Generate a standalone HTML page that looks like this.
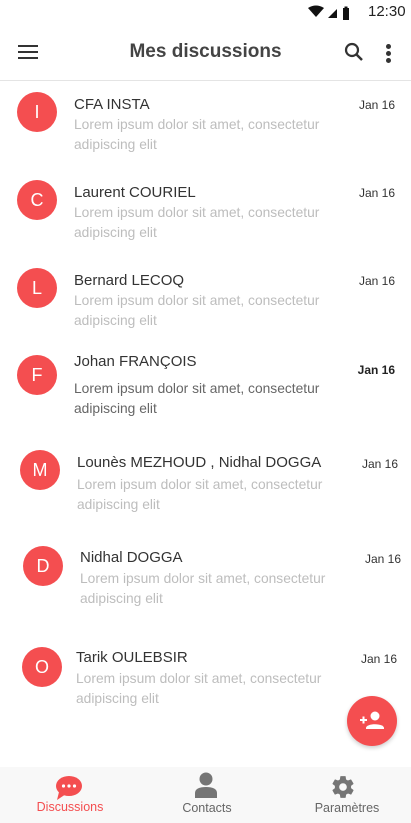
<!DOCTYPE html>
<html><head><meta charset="utf-8"><style>
*{margin:0;padding:0;box-sizing:border-box}
body{width:411px;height:823px;position:relative;background:#fff;font-family:"Liberation Sans",sans-serif;overflow:hidden}
.a{position:absolute}
.av{position:absolute;width:40px;height:40px;border-radius:50%;background:#f44e50;color:#fff;font-size:18px;line-height:40px;text-align:center}
.n{position:absolute;font-size:15px;line-height:20px;color:#333;white-space:nowrap}
.l{position:absolute;font-size:13.8px;line-height:20px;color:#bdbdbd;white-space:nowrap}
.d{position:absolute;font-size:12px;line-height:16px;color:#333;white-space:nowrap;text-align:right;width:60px}
</style></head><body>
<div class="a" style="left:308px;top:5px">
<svg width="52" height="16" viewBox="0 0 52 16"><path d="M0 3 Q8 -2 16 3 L8 12Z" fill="#111"/><path d="M20 13 L29 13 L29 4Z" fill="#111"/><rect x="35" y="3" width="6" height="12" fill="#111"/><rect x="36.5" y="1.5" width="3" height="2" fill="#111"/></svg></div>
<div class="a" style="left:368px;top:3px;font-size:15px;color:#222">12:30</div>
<div class="a" style="left:18px;top:45px;width:20px;height:2px;background:#333;box-shadow:0 6px 0 #333,0 12px 0 #333"></div>
<div class="a" style="left:0;width:411px;top:41px;text-align:center;font-size:19px;font-weight:bold;color:#444">Mes discussions</div>
<svg class="a" style="left:344px;top:42px" width="20" height="20" viewBox="0 0 20 20"><circle cx="8" cy="8" r="6" stroke="#333" stroke-width="2.2" fill="none"/><path d="M12.5 12.5L18 18" stroke="#333" stroke-width="2.5"/></svg>
<div class="a" style="left:386px;top:44px;width:5px;height:5px;border-radius:50%;background:#333;box-shadow:0 7px 0 #333,0 14px 0 #333"></div>
<div class="a" style="left:0;top:80px;width:411px;height:1px;background:#e4e4e4"></div>

<div class="av" style="left:17px;top:92px">I</div>
<div class="n" style="left:74px;top:95px">CFA INSTA</div>
<div class="d" style="left:335px;top:97px">Jan 16</div>
<div class="l" style="left:74px;top:115px">Lorem ipsum dolor sit amet, consectetur<br>adipiscing elit</div>

<div class="av" style="left:17px;top:180px">C</div>
<div class="n" style="left:74px;top:183px">Laurent COURIEL</div>
<div class="d" style="left:335px;top:185px">Jan 16</div>
<div class="l" style="left:74px;top:203px">Lorem ipsum dolor sit amet, consectetur<br>adipiscing elit</div>

<div class="av" style="left:17px;top:268px">L</div>
<div class="n" style="left:74px;top:271px">Bernard LECOQ</div>
<div class="d" style="left:335px;top:273px">Jan 16</div>
<div class="l" style="left:74px;top:291px">Lorem ipsum dolor sit amet, consectetur<br>adipiscing elit</div>

<div class="av" style="left:17px;top:355px">F</div>
<div class="n" style="left:74px;top:352px">Johan FRANÇOIS</div>
<div class="d" style="left:335px;top:362px;font-weight:bold;color:#222">Jan 16</div>
<div class="l" style="left:74px;top:379px;color:#666">Lorem ipsum dolor sit amet, consectetur<br>adipiscing elit</div>

<div class="av" style="left:20px;top:450px">M</div>
<div class="n" style="left:77px;top:453px">Lounès MEZHOUD , Nidhal DOGGA</div>
<div class="d" style="left:338px;top:456px">Jan 16</div>
<div class="l" style="left:77px;top:475px">Lorem ipsum dolor sit amet, consectetur<br>adipiscing elit</div>

<div class="av" style="left:23px;top:546px">D</div>
<div class="n" style="left:80px;top:548px">Nidhal DOGGA</div>
<div class="d" style="left:341px;top:551px">Jan 16</div>
<div class="l" style="left:80px;top:569px">Lorem ipsum dolor sit amet, consectetur<br>adipiscing elit</div>

<div class="av" style="left:22px;top:647px">O</div>
<div class="n" style="left:76px;top:648px">Tarik OULEBSIR</div>
<div class="d" style="left:337px;top:651px">Jan 16</div>
<div class="l" style="left:76px;top:669px">Lorem ipsum dolor sit amet, consectetur<br>adipiscing elit</div>

<div class="a" style="left:347px;top:696px;width:50px;height:50px;border-radius:50%;background:#f44e50;box-shadow:0 2px 4px rgba(0,0,0,.2)">
<svg width="50" height="50" viewBox="0 0 50 50"><path d="M13 24h7M16.5 20.5v7" stroke="#fff" stroke-width="2"/><circle cx="28" cy="20" r="4.5" fill="#fff"/><path d="M19 32c0-5 18-5 18 0v1H19z" fill="#fff"/></svg></div>

<div class="a" style="left:0;top:767px;width:411px;height:56px;background:#f8f8f8"></div>
<svg class="a" style="left:55px;top:775px" width="28" height="26" viewBox="0 0 28 26"><ellipse cx="14" cy="11" rx="13" ry="10" fill="#f44e50"/><path d="M4 17 L2 25 L11 19Z" fill="#f44e50"/><circle cx="8.5" cy="11" r="1.6" fill="#fff"/><circle cx="14" cy="11" r="1.6" fill="#fff"/><circle cx="19.5" cy="11" r="1.6" fill="#fff"/></svg>
<div class="a" style="left:0;width:140px;top:800px;text-align:center;font-size:12.5px;color:#f44e50">Discussions</div>
<svg class="a" style="left:194px;top:772px" width="24" height="26" viewBox="0 0 24 26"><circle cx="12" cy="7" r="6.5" fill="#757575"/><path d="M1 26v-5c0-4 4-6 11-6s11 2 11 6v5z" fill="#757575"/></svg>
<div class="a" style="left:137px;width:140px;top:801px;text-align:center;font-size:12.5px;color:#666">Contacts</div>
<svg class="a" style="left:330px;top:774px" width="26" height="26" viewBox="0 0 24 24"><path fill="#757575" d="M19.4 13c.04-.3.06-.65.06-1s-.02-.7-.06-1l2.1-1.65c.2-.15.25-.42.12-.64l-2-3.46c-.12-.22-.39-.3-.61-.22l-2.490 1c-.52-.4-1.080-.73-1.690-.98l-.38-2.650C14.46 2.18 14.25 2 14 2h-4c-.25 0-.46.18-.49.42l-.38 2.65c-.61.25-1.17.59-1.69.98l-2.49-1c-.23-.09-.49 0-.61.22l-2 3.46c-.13.22-.07.49.12.64L4.57 11c-.04.32-.07.65-.07 1s.03.68.07 1l-2.11 1.65c-.19.15-.24.42-.12.64l2 3.46c.12.22.39.3.61.22l2.49-1c.52.4 1.08.73 1.69.98l.38 2.65c.03.24.24.42.49.42h4c.25 0 .46-.18.49-.42l.38-2.65c.61-.25 1.17-.59 1.69-.98l2.49 1c.23.09.49 0 .61-.22l2-3.46c.12-.22.07-.49-.12-.64L19.4 13zM12 15.5c-1.93 0-3.5-1.57-3.5-3.5s1.57-3.5 3.5-3.5 3.5 1.57 3.5 3.5-1.57 3.5-3.5 3.5z"/></svg>
<div class="a" style="left:277px;width:140px;top:801px;text-align:center;font-size:12.5px;color:#666">Paramètres</div>
</body></html>
